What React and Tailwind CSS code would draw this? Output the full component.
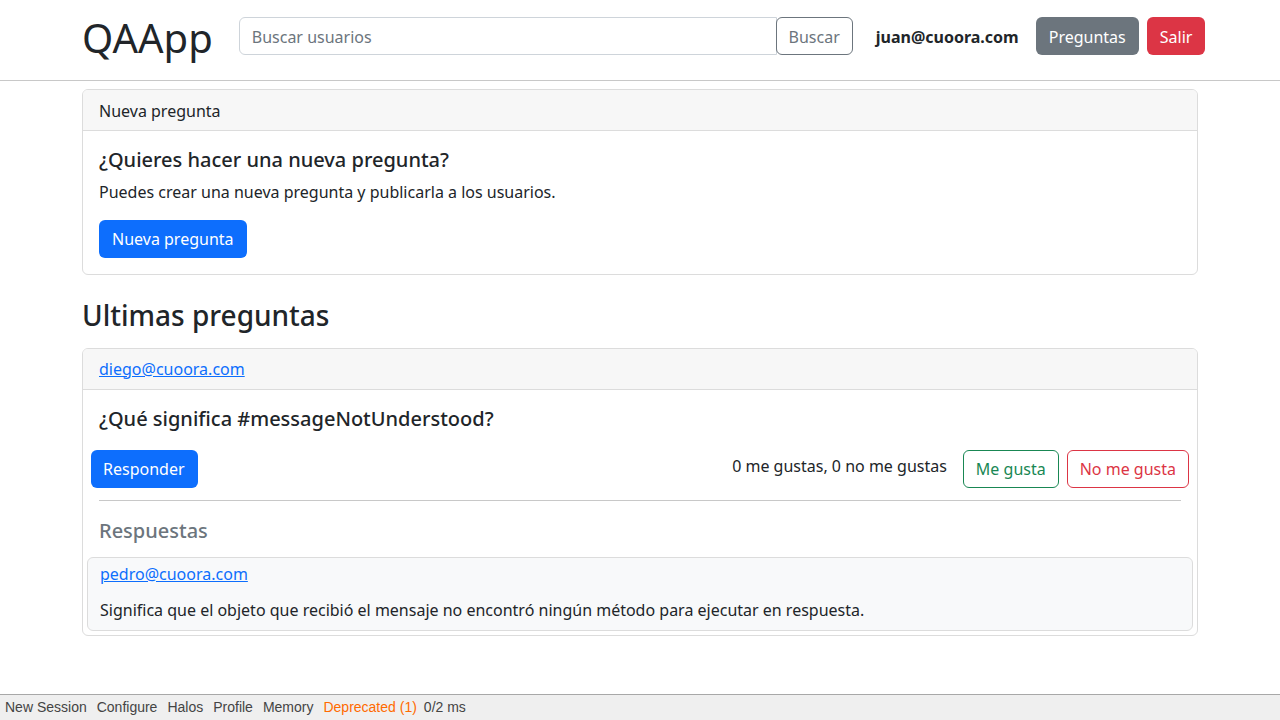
import React from "react";

export default function App() {
  return (
    <div className="min-h-screen flex flex-col bg-white text-[#212529] font-['Noto_Sans',sans-serif] text-base">
      {/* Navbar */}
      <header className="border-b border-[#c8c8c8] h-[81px]">
        <div className="w-[1140px] mx-auto px-3 flex items-start pt-[17px] h-[80px]">
          <h1 className="shrink-0 text-[40px] leading-[1.2] font-normal mr-[26px] -mt-[3px]">QAApp</h1>
          <div className="shrink-0 flex w-[614px] h-[38px]">
            <input
              type="text"
              placeholder="Buscar usuarios"
              className="flex-1 min-w-0 border border-[#ced4da] rounded-l-[6px] px-3 pt-px text-base placeholder:text-[#6c757d] outline-none"
            />
            <button className="shrink-0 border border-[#6c757d] rounded-[6px] -ml-px px-3 pt-px text-[#6c757d] text-base">
              Buscar
            </button>
          </div>
          <span className="shrink-0 ml-[23px] mt-[8px] font-bold text-base">juan@cuoora.com</span>
          <button className="shrink-0 ml-[17px] bg-[#6c757d] text-white rounded-[6px] h-[38px] px-[13px] pt-px text-base">
            Preguntas
          </button>
          <button className="shrink-0 ml-2 bg-[#dc3545] text-white rounded-[6px] h-[38px] px-[13px] pt-px text-base">
            Salir
          </button>
        </div>
      </header>

      <main className="w-[1140px] mx-auto px-3 pt-2">
        {/* Nueva pregunta card */}
        <div className="border border-[#dcdcdc] rounded-[6px] overflow-hidden">
          <div className="bg-[#f7f7f7] border-b border-[#dcdcdc] px-4 pt-px h-[41px] flex items-center">
            Nueva pregunta
          </div>
          <div className="p-4">
            <h5 className="text-[20px] leading-[1.2] font-medium mt-[1px] mb-2">¿Quieres hacer una nueva pregunta?</h5>
            <p className="mb-4 leading-[1.5]">Puedes crear una nueva pregunta y publicarla a los usuarios.</p>
            <button className="bg-[#0d6efd] text-white rounded-[6px] h-[38px] px-[13px]">Nueva pregunta</button>
          </div>
        </div>

        <h2 className="text-[28px] leading-[1.2] font-medium mt-[24px] mb-[15px]">Ultimas preguntas</h2>

        {/* Question card */}
        <div className="border border-[#dcdcdc] rounded-[6px] overflow-hidden">
          <div className="bg-[#f7f7f7] border-b border-[#dcdcdc] px-4 h-[41px] flex items-center">
            <a href="#" className="text-[#0d6efd] underline">diego@cuoora.com</a>
          </div>
          <div className="px-4 pt-4 pb-1">
            <h5 className="text-[20px] leading-[1.2] font-medium mt-[1px] mb-[19px]">¿Qué significa #messageNotUnderstood?</h5>
            <div className="flex items-start -mx-2">
              <button className="bg-[#0d6efd] text-white rounded-[6px] h-[38px] pl-3 pr-[13px]">Responder</button>
              <span className="ml-auto mt-[4px] leading-[1.5]">0 me gustas, 0 no me gustas</span>
              <button className="ml-4 border border-[#198754] text-[#198754] rounded-[6px] h-[38px] px-3">Me gusta</button>
              <button className="ml-2 border border-[#dc3545] text-[#dc3545] rounded-[6px] h-[38px] px-3">No me gusta</button>
            </div>
            <hr className="border-t border-[#c8c8c8] mt-[12px] mb-[18px]" />
            <h5 className="text-[20px] leading-[1.2] font-medium text-[#6c757d] mb-[10px]">Respuestas</h5>
          </div>
          <div className="mx-1 mb-1 border border-[#dcdcdc] rounded-[6px] bg-[#f8f9fa] px-3 pt-[4px] pb-[8px]">
            <a href="#" className="text-[#0d6efd] underline leading-[1.5]">pedro@cuoora.com</a>
            <p className="mt-[12px] leading-[1.5]">
              Significa que el objeto que recibió el mensaje no encontró ningún método para ejecutar en respuesta.
            </p>
          </div>
        </div>
      </main>

      <div className="flex-1" />

      {/* Toolbar */}
      <footer className="h-[26px] bg-[#efefef] border-t border-[#a8a8a8] flex items-center pb-px px-[5px] gap-[10px] text-[14px] text-[#444] font-['Liberation_Sans',sans-serif]">
        <span>New Session</span>
        <span>Configure</span>
        <span>Halos</span>
        <span>Profile</span>
        <span>Memory</span>
        <span className="text-[#ff6a00]">Deprecated (1)</span>
        <span className="-ml-[3px]">0/2 ms</span>
      </footer>
    </div>
  );
}
